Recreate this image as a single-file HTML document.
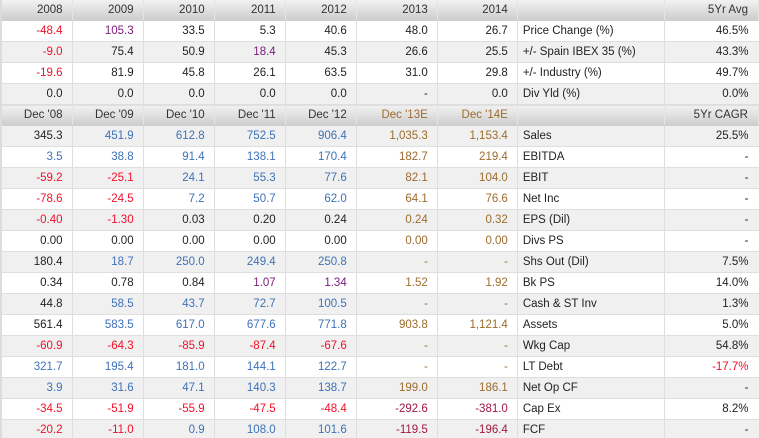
<!DOCTYPE html>
<html><head><meta charset="utf-8"><style>
html,body{margin:0;padding:0;background:#fff;width:759px;height:438px;overflow:hidden}
table{border-collapse:collapse;table-layout:fixed;width:759px;font-family:"Liberation Sans",Arial,sans-serif;font-size:11.5px;color:#222;border-left:2px solid #dcdcdc}
td{height:20px;padding:0 9px 0 0;text-align:right;border-bottom:1px solid #dedede;border-right:1px solid #dedede;white-space:nowrap;overflow:hidden;line-height:20px}
td.l{text-align:left;padding:0 0 0 5px}
td:last-child{border-right:none;padding-right:10px}
tr.h td{background:linear-gradient(#f2f2f2,#cdcdcd);color:#333;border-right:1px solid #e4e4e4;border-bottom:1px solid #cfcfcf}
tr.g td{background:#f0f0f0}
.R{color:#f0102a}.B{color:#3d72b8}.P{color:#7a1a7e}.N{color:#9c6c2c}.E{color:#a01840}
</style></head><body>
<table>
<colgroup><col style="width:71px"><col style="width:71px"><col style="width:71px"><col style="width:71px"><col style="width:71px"><col style="width:81px"><col style="width:80px"><col style="width:147px"><col style="width:94px"></colgroup>
<tr class="h"><td>2008</td><td>2009</td><td>2010</td><td>2011</td><td>2012</td><td>2013</td><td>2014</td><td class="l"></td><td>5Yr Avg</td></tr>
<tr><td class="R">-48.4</td><td class="P">105.3</td><td>33.5</td><td>5.3</td><td>40.6</td><td>48.0</td><td>26.7</td><td class="l">Price Change (%)</td><td>46.5%</td></tr>
<tr class="g"><td class="R">-9.0</td><td>75.4</td><td>50.9</td><td class="P">18.4</td><td>45.3</td><td>26.6</td><td>25.5</td><td class="l">+/- Spain IBEX 35 (%)</td><td>43.3%</td></tr>
<tr><td class="R">-19.6</td><td>81.9</td><td>45.8</td><td>26.1</td><td>63.5</td><td>31.0</td><td>29.8</td><td class="l">+/- Industry (%)</td><td>49.7%</td></tr>
<tr class="g"><td>0.0</td><td>0.0</td><td>0.0</td><td>0.0</td><td>0.0</td><td>-</td><td>0.0</td><td class="l">Div Yld (%)</td><td>0.0%</td></tr>
<tr class="h"><td>Dec '08</td><td>Dec '09</td><td>Dec '10</td><td>Dec '11</td><td>Dec '12</td><td style="color:#9c6c2c">Dec '13E</td><td style="color:#9c6c2c">Dec '14E</td><td class="l"></td><td>5Yr CAGR</td></tr>
<tr class="g"><td>345.3</td><td class="B">451.9</td><td class="B">612.8</td><td class="B">752.5</td><td class="B">906.4</td><td class="N">1,035.3</td><td class="N">1,153.4</td><td class="l">Sales</td><td>25.5%</td></tr>
<tr><td class="B">3.5</td><td class="B">38.8</td><td class="B">91.4</td><td class="B">138.1</td><td class="B">170.4</td><td class="N">182.7</td><td class="N">219.4</td><td class="l">EBITDA</td><td>-</td></tr>
<tr class="g"><td class="R">-59.2</td><td class="R">-25.1</td><td class="B">24.1</td><td class="B">55.3</td><td class="B">77.6</td><td class="N">82.1</td><td class="N">104.0</td><td class="l">EBIT</td><td>-</td></tr>
<tr><td class="R">-78.6</td><td class="R">-24.5</td><td class="B">7.2</td><td class="B">50.7</td><td class="B">62.0</td><td class="N">64.1</td><td class="N">76.6</td><td class="l">Net Inc</td><td>-</td></tr>
<tr class="g"><td class="R">-0.40</td><td class="R">-1.30</td><td>0.03</td><td>0.20</td><td>0.24</td><td class="N">0.24</td><td class="N">0.32</td><td class="l">EPS (Dil)</td><td>-</td></tr>
<tr><td>0.00</td><td>0.00</td><td>0.00</td><td>0.00</td><td>0.00</td><td class="N">0.00</td><td class="N">0.00</td><td class="l">Divs PS</td><td>-</td></tr>
<tr class="g"><td>180.4</td><td class="B">18.7</td><td class="B">250.0</td><td class="B">249.4</td><td class="B">250.8</td><td class="N">-</td><td class="N">-</td><td class="l">Shs Out (Dil)</td><td>7.5%</td></tr>
<tr><td>0.34</td><td>0.78</td><td>0.84</td><td class="P">1.07</td><td class="P">1.34</td><td class="N">1.52</td><td class="N">1.92</td><td class="l">Bk PS</td><td>14.0%</td></tr>
<tr class="g"><td>44.8</td><td class="B">58.5</td><td class="B">43.7</td><td class="B">72.7</td><td class="B">100.5</td><td class="N">-</td><td class="N">-</td><td class="l">Cash &amp; ST Inv</td><td>1.3%</td></tr>
<tr><td>561.4</td><td class="B">583.5</td><td class="B">617.0</td><td class="B">677.6</td><td class="B">771.8</td><td class="N">903.8</td><td class="N">1,121.4</td><td class="l">Assets</td><td>5.0%</td></tr>
<tr class="g"><td class="R">-60.9</td><td class="R">-64.3</td><td class="R">-85.9</td><td class="R">-87.4</td><td class="R">-67.6</td><td class="N">-</td><td class="N">-</td><td class="l">Wkg Cap</td><td>54.8%</td></tr>
<tr><td class="B">321.7</td><td class="B">195.4</td><td class="B">181.0</td><td class="B">144.1</td><td class="B">122.7</td><td class="N">-</td><td class="N">-</td><td class="l">LT Debt</td><td class="R">-17.7%</td></tr>
<tr class="g"><td class="B">3.9</td><td class="B">31.6</td><td class="B">47.1</td><td class="B">140.3</td><td class="B">138.7</td><td class="N">199.0</td><td class="N">186.1</td><td class="l">Net Op CF</td><td>-</td></tr>
<tr><td class="R">-34.5</td><td class="R">-51.9</td><td class="R">-55.9</td><td class="R">-47.5</td><td class="R">-48.4</td><td class="E">-292.6</td><td class="E">-381.0</td><td class="l">Cap Ex</td><td>8.2%</td></tr>
<tr class="g"><td class="R">-20.2</td><td class="R">-11.0</td><td class="B">0.9</td><td class="B">108.0</td><td class="B">101.6</td><td class="E">-119.5</td><td class="E">-196.4</td><td class="l">FCF</td><td>-</td></tr>
</table>
</body></html>
